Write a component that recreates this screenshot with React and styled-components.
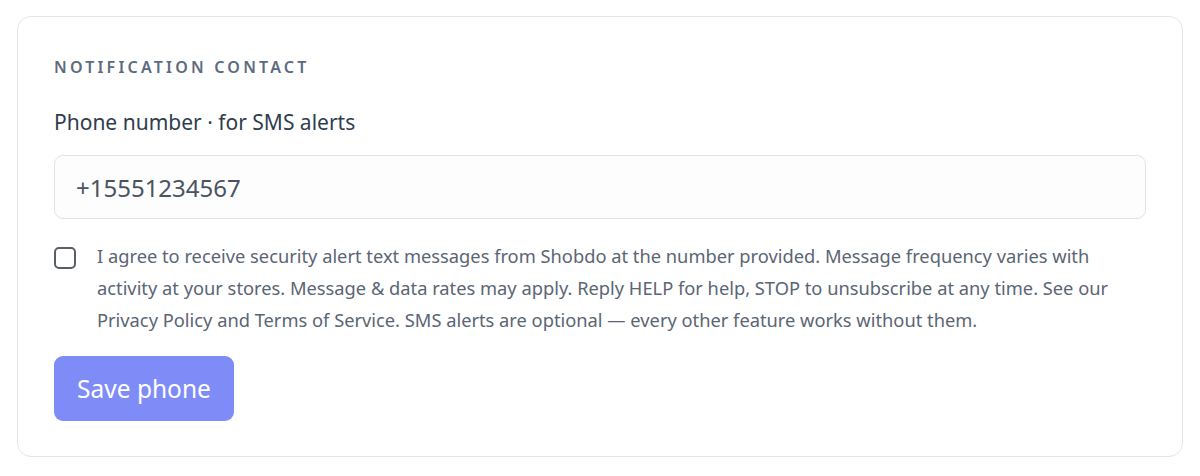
import styled, { createGlobalStyle } from 'styled-components'

const GlobalStyle = createGlobalStyle`
  body {
    margin: 0;
    background: #ffffff;
    font-family: 'Noto Sans', sans-serif;
  }
`

const Page = styled.div`
  padding: 16px 17px;
`

const Card = styled.section`
  border: 1px solid #e3e5e8;
  border-radius: 14px;
  padding: 40px 36px 35px;
  background: #ffffff;
`

const SectionTitle = styled.h2`
  margin: 0 0 31px;
  font-size: 16px;
  line-height: 20px;
  font-weight: 600;
  letter-spacing: 3.2px;
  text-transform: uppercase;
  color: #5c6b7d;
`

const FieldLabel = styled.label`
  display: block;
  font-size: 21px;
  line-height: 28px;
  color: #2f3d4e;
  margin-bottom: 19px;
`

const PhoneInput = styled.input`
  display: block;
  box-sizing: border-box;
  width: 100%;
  height: 64px;
  padding: 0 21px;
  border: 1px solid #dfe2e7;
  border-radius: 9px;
  background: #fdfdfe;
  font-family: inherit;
  font-size: 24px;
  color: #4a5361;
  outline: none;
`

const ConsentRow = styled.label`
  display: flex;
  align-items: flex-start;
  gap: 21px;
  margin-top: 21px;
`

const Checkbox = styled.span`
  flex: 0 0 auto;
  box-sizing: border-box;
  width: 22px;
  height: 22px;
  margin-top: 7px;
  border: 2px solid #5a5f66;
  border-radius: 5px;
  background: #ffffff;
`

const ConsentText = styled.p`
  margin: 0;
  font-size: 18.3px;
  line-height: 32px;
  color: #5b6574;
`

const SaveButton = styled.button`
  display: block;
  margin-top: 20px;
  width: 180px;
  height: 65px;
  border: none;
  border-radius: 9px;
  background: #7f8cf8;
  color: #ffffff;
  font-family: inherit;
  font-size: 24.5px;
  cursor: not-allowed;
`

export default function App() {
  return (
    <>
      <GlobalStyle />
      <Page>
        <Card>
          <SectionTitle>Notification contact</SectionTitle>
          <FieldLabel htmlFor="phone">Phone number · for SMS alerts</FieldLabel>
          <PhoneInput id="phone" defaultValue="+15551234567" />
          <ConsentRow>
            <Checkbox />
            <ConsentText>
              I agree to receive security alert text messages from Shobdo at the number provided.
              Message frequency varies with activity at your stores. Message &amp; data rates may
              apply. Reply HELP for help, STOP to unsubscribe at any time. See our Privacy Policy
              and Terms of Service. SMS alerts are optional — every other feature works without
              them.
            </ConsentText>
          </ConsentRow>
          <SaveButton disabled>Save phone</SaveButton>
        </Card>
      </Page>
    </>
  )
}
